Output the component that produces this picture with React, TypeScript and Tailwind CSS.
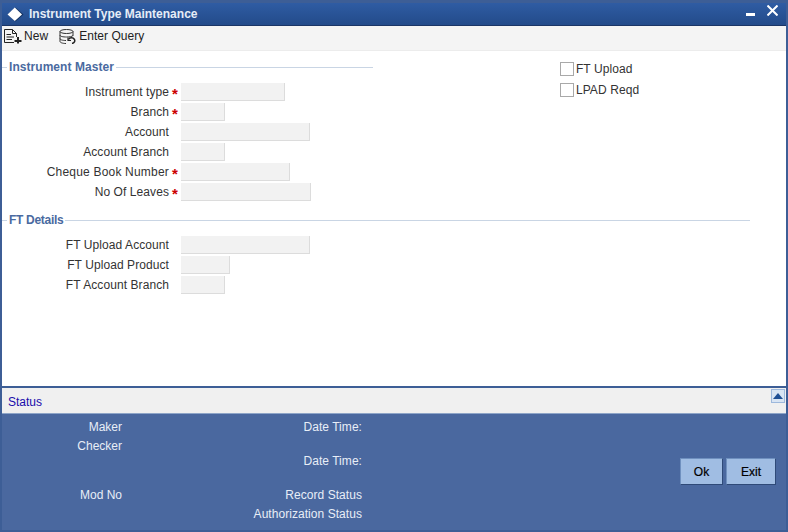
const font = { fontFamily: '"Liberation Sans", Arial, sans-serif' };

type Field = { label: string; width: string; required?: boolean; wide?: boolean };

const masterFields: Field[] = [
  { label: "Instrument type", width: "w-[104px]", required: true },
  { label: "Branch", width: "w-[44px]", required: true },
  { label: "Account", width: "w-[129px]" },
  { label: "Account Branch", width: "w-[44px]" },
  { label: "Cheque Book Number", width: "w-[109px]", required: true, wide: true },
  { label: "No Of Leaves", width: "w-[130px]", required: true },
];

const ftFields: Field[] = [
  { label: "FT Upload Account", width: "w-[129px]" },
  { label: "FT Upload Product", width: "w-[49px]" },
  { label: "FT Account Branch", width: "w-[44px]" },
];

function Row({ label, width, required, wide }: Field) {
  return (
    <div className="flex h-5 items-center">
      <span className={`w-[167px] whitespace-nowrap text-right text-[12px] text-[#333333] ${wide ? "tracking-[0.2px]" : "tracking-[0.08px]"}`}>{label}</span>
      <span className="w-[12px] pl-[3px] pt-[2px] text-[15px] font-bold leading-none text-[#cc0000]">{required ? "*" : ""}</span>
      <div className={`h-[18px] ${width} border-b border-r border-[#dcdcdc] bg-[#f2f2f2]`} />
    </div>
  );
}

function Legend({ title, lineWidth, tracking }: { title: string; lineWidth: string; tracking: string }) {
  return (
    <div className="flex h-4 items-center">
      <div className="h-px w-[5px] bg-[#c9d5e4]" />
      <span className={`px-[2px] text-[12px] font-bold text-[#4a6aa0] ${tracking}`}>{title}</span>
      <div className={`h-px ${lineWidth} bg-[#c9d5e4]`} />
    </div>
  );
}

function NewIcon() {
  return (
    <svg width="18" height="15" viewBox="0 0 18 15" fill="none" stroke="#222" strokeWidth="1">
      <path d="M0.5 13.5V0.5H8.5L12.5 4.5V8" />
      <path d="M8.5 0.5V4.5H12.5" />
      <path d="M2.5 5.5H7M2.5 8H10M2.5 10.5H8M0.5 13.5H10" />
      <path d="M14 8V14.5M10.5 12H17.5" strokeWidth="2" />
    </svg>
  );
}

function QueryIcon() {
  return (
    <svg width="17" height="15" viewBox="0 0 17 15" fill="none" stroke="#333" strokeWidth="1">
      <ellipse cx="7.5" cy="2.5" rx="6.5" ry="2" />
      <path d="M1 2.5V12.5C1 13.5 3.5 14.5 7 14.5" />
      <path d="M14 2.5V7" />
      <path d="M1 6C1 7.5 4 8 7.5 8S13 7.5 14 6.5" />
      <path d="M1 9.5C1 10.8 3.5 11.5 7 11.5" />
      <path d="M9.5 10.5C10.5 8.5 14 8 15.5 10.5C16.2 12 15.5 14 13 14.5" strokeWidth="1.5" stroke="#222" />
      <path d="M9 8.5V11.5H12" strokeWidth="1.2" stroke="#222" />
    </svg>
  );
}

export default function App() {
  return (
    <div className="flex h-[532px] w-[788px] flex-col overflow-hidden bg-[#3d5e96] pl-[2px] pr-[2px] pt-[3px] pb-[2px]" style={font}>
      {/* Title */}
      <div className="flex h-[23px] shrink-0 items-center border-b border-[#1b3566] bg-gradient-to-b from-[#2f5ca3] to-[#234b8a] pl-[5px]">
        <svg width="17" height="15" viewBox="0 0 17 15" className="mr-[5px]">
          <path d="M8.5 0.5L16.5 7.5L8.5 14.5L0.5 7.5Z" fill="#12305f" />
          <path d="M7.8 0.5L15 7.5L7.8 14L0.5 7.5Z" fill="#ffffff" />
        </svg>
        <span className="text-[12px] font-bold text-[#e6edf7]">Instrument Type Maintenance</span>
        <div className="ml-auto mr-[8px] flex items-start gap-[12px] self-stretch">
          <div className="mt-[10px] h-[3px] w-[9px] bg-white" />
          <svg width="11" height="11" viewBox="0 0 11 11" className="mt-[2px]" stroke="#ffffff" strokeWidth="2">
            <path d="M0.5 0.5L10.5 10.5M10.5 0.5L0.5 10.5" />
          </svg>
        </div>
      </div>

      {/* Toolbar */}
      <div className="flex h-[25px] shrink-0 items-center border-b border-[#ececec] bg-[#f4f4f4] pb-[4px] pl-[2px] text-[12px] tracking-[0.05px] text-[#222222]">
        <NewIcon />
        <span className="ml-[2px]">New</span>
        <div className="ml-[11px] flex"><QueryIcon /></div>
        <span className="ml-[3px]">Enter Query</span>
      </div>

      {/* Form */}
      <div className="flex min-h-0 flex-1 flex-col bg-white pt-[8px]">
        <div className="flex">
          <div className="flex flex-col">
            <Legend title="Instrument Master" lineWidth="w-[257px]" tracking="tracking-[0.05px]" />
            <div className="mt-[7px] flex flex-col">
              {masterFields.map((f) => (
                <Row key={f.label} {...f} />
              ))}
            </div>
          </div>
          <div className="ml-[187px] flex flex-col gap-[7px] pt-[3px]">
            <label className="flex h-[14px] items-center gap-[2px] text-[12px] tracking-[0.1px] text-[#333333]">
              <span className="h-[14px] w-[14px] border border-[#a9a9a9] bg-white" />
              FT Upload
            </label>
            <label className="flex h-[14px] items-center gap-[2px] text-[12px] tracking-[0.1px] text-[#333333]">
              <span className="h-[14px] w-[14px] border border-[#a9a9a9] bg-white" />
              LPAD Reqd
            </label>
          </div>
        </div>
        <div className="mt-[10px]">
          <Legend title="FT Details" lineWidth="w-[685px]" tracking="tracking-[-0.3px]" />
        </div>
        <div className="mt-[7px] flex flex-col">
          {ftFields.map((f) => (
            <Row key={f.label} {...f} />
          ))}
        </div>
      </div>

      {/* Status */}
      <div className="flex h-[27px] shrink-0 items-start justify-between border-t-2 border-[#3d5e96] bg-[#f0f0f0] pl-[6px]">
        <span className="mt-[5px] text-[12px] text-[#1a0dab]">Status</span>
        <div className="mr-[1px] mt-[1px] flex h-[14px] w-[14px] items-center justify-center border border-[#9db8dc] bg-[#d8e4f3]">
          <svg width="10" height="6" viewBox="0 0 10 6">
            <path d="M5 0L10 6H0Z" fill="#1f4f94" />
          </svg>
        </div>
      </div>

      {/* Footer */}
      <div className="flex min-h-0 flex-1 basis-[117px] grow-0 border-t border-[#8ea5c8] bg-[#4a689f] text-[12px] text-[#e8eef7]">
        <div className="flex w-[120px] flex-col items-end pt-[4px]">
          <span className="h-[19px]">Maker</span>
          <span className="h-[19px]">Checker</span>
          <span className="mt-[30px] h-[19px]">Mod No</span>
        </div>
        <div className="flex w-[240px] flex-col items-end pt-[4px] tracking-[0.05px]">
          <span className="h-[19px]">Date Time:</span>
          <span className="mt-[15px] h-[19px]">Date Time:</span>
          <span className="mt-[15px] h-[19px]">Record Status</span>
          <span className="h-[19px]">Authorization Status</span>
        </div>
        <div className="ml-auto mr-[10px] mt-[44px] flex items-start gap-[3px] text-[12px] text-black [-webkit-text-stroke:0.2px_black]">
          <button className="h-[27px] w-[43px] border border-[#6f90bf] border-b-[#2f4a78] border-r-[#2f4a78] bg-[#a0bde3]">Ok</button>
          <button className="h-[27px] w-[50px] border border-[#6f90bf] border-b-[#2f4a78] border-r-[#2f4a78] bg-[#a0bde3]">Exit</button>
        </div>
      </div>
    </div>
  );
}
